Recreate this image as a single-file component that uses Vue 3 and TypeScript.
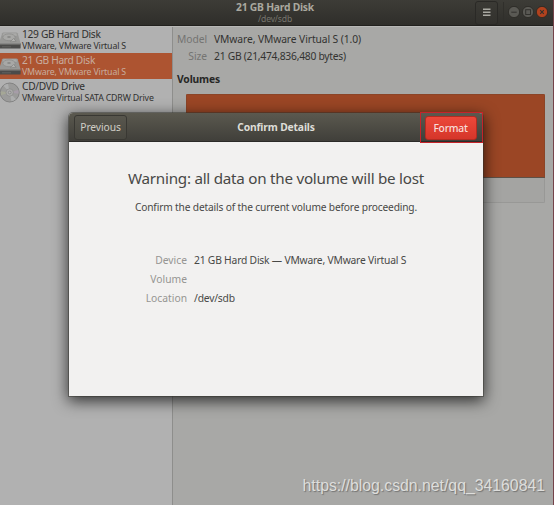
<script setup lang="ts">
interface Drive {
  name: string
  model: string
  kind: 'disk' | 'optical'
  selected?: boolean
}

const drives: Drive[] = [
  { name: '129 GB Hard Disk', model: 'VMware, VMware Virtual S', kind: 'disk' },
  { name: '21 GB Hard Disk', model: 'VMware, VMware Virtual S', kind: 'disk', selected: true },
  { name: 'CD/DVD Drive', model: 'VMware Virtual SATA CDRW Drive', kind: 'optical' },
]

const details = [
  { label: 'Device', value: '21 GB Hard Disk — VMware, VMware Virtual S' },
  { label: 'Volume', value: '' },
  { label: 'Location', value: '/dev/sdb' },
]
</script>

<template>
  <div class="window">
    <header class="titlebar">
      <div class="titles">
        <div class="title">21 GB Hard Disk</div>
        <div class="subtitle">/dev/sdb</div>
      </div>
      <div class="controls">
        <button class="menu" aria-label="Menu">
          <svg width="8" height="9" viewBox="0 0 8 9">
            <path d="M0 1.3h7.5M0 4.3h7.5M0 7.3h7.5" stroke="#aaa9a2" stroke-width="1.5" />
          </svg>
        </button>
        <span class="divider"></span>
        <svg class="wm" width="40" height="12" viewBox="0 0 40 12">
          <g fill="#5a5954" stroke="#262521" stroke-width=".7">
            <circle cx="6" cy="6" r="5.6" />
            <circle cx="20" cy="6" r="5.6" />
            <circle cx="34" cy="6" r="5.6" fill="#b1421e" />
          </g>
          <g fill="none" stroke="#32312d" stroke-width="1">
            <path d="M3.3 6.2h5.4" />
            <rect x="17.7" y="3.7" width="4.8" height="4.8" />
            <path d="M32.2 4.2l3.6 3.6M35.8 4.2l-3.6 3.6" stroke-width="1.1" />
          </g>
        </svg>
      </div>
    </header>

    <div class="body">
      <aside class="sidebar">
        <div v-for="d in drives" :key="d.name" class="drive" :class="{ selected: d.selected }">
          <svg v-if="d.kind === 'disk'" class="icon" width="21" height="20" viewBox="0 0 21 20">
            <path d="M0 12.5h20.6v4.2q0 .9-.9.9H0z" fill="#4b4b4a" />
            <path d="M0 12.2h20.6v1.5H0z" fill="#777775" />
            <path d="M2.2 2.2q.3-.8 1.2-.8h13q1 0 1.3.9l2.9 10.2H0V9z" fill="#989896" />
            <path d="M3.5 2.2h12.8l.7 2.5H2.6z" fill="#aaaaa8" />
            <ellipse cx="9" cy="6.3" rx="6.2" ry="3.4" fill="#a8a8a6" stroke="#858583" stroke-width=".6" />
            <ellipse cx="9" cy="6" rx="1.9" ry="1" fill="#8a8a88" />
            <path d="M13.4 7.5l2.8 2.6-5.8.8z" fill="#b2b2b0" stroke="#777775" stroke-width=".5" />
            <path d="M2 15.8h9" stroke="#6b6b69" stroke-width=".7" />
          </svg>
          <svg v-else class="icon" width="21" height="21" viewBox="0 0 21 21">
            <circle cx="9.7" cy="10.5" r="9.5" fill="#9b9b9a" stroke="#797978" stroke-width=".8" />
            <path d="M9.7 10.5L3.5 3.8A9 9 0 0 1 8 1.7zM9.7 10.5l6.2 6.7a9 9 0 0 1-4.5 2.1z" fill="#adaeae" />
            <path d="M9.7 10.5l8.6-2.7a9 9 0 0 1 .2 4z" fill="#a69da8" />
            <path d="M9.7 10.5L1 13.2a9 9 0 0 1-.1-4z" fill="#a5a796" />
            <circle cx="9.7" cy="10.5" r="3.7" fill="#aaaaa9" stroke="#858584" stroke-width=".6" />
            <circle cx="9.7" cy="10.5" r="1.4" fill="#b3b3b3" stroke="#777" stroke-width=".6" />
          </svg>
          <div class="drive-text">
            <div class="drive-name">{{ d.name }}</div>
            <div class="drive-model">{{ d.model }}</div>
          </div>
        </div>
      </aside>

      <main class="content">
        <dl class="info">
          <dt>Model</dt>
          <dd>VMware, VMware Virtual S (1.0)</dd>
          <dt>Size</dt>
          <dd class="tight">21 GB (21,474,836,480 bytes)</dd>
        </dl>
        <h2>Volumes</h2>
        <div class="volume">
          <div class="partition"></div>
          <div class="toolbar"></div>
        </div>
      </main>
    </div>

    <section class="dialog">
      <header class="dialog-bar">
        <button class="btn previous">Previous</button>
        <div class="dialog-title">Confirm Details</div>
        <div class="highlight">
          <button class="btn format">Format</button>
        </div>
      </header>
      <div class="dialog-body">
        <h1>Warning: all data on the volume will be lost</h1>
        <p>Confirm the details of the current volume before proceeding.</p>
        <dl class="details">
          <template v-for="row in details" :key="row.label">
            <dt>{{ row.label }}</dt>
            <dd>{{ row.value }}</dd>
          </template>
        </dl>
      </div>
    </section>

    <div class="watermark">https://blog.csdn.net/qq_34160841</div>
  </div>
</template>

<style>
body {
  overflow: hidden;
}
</style>

<style scoped>
* {
  box-sizing: border-box;
  margin: 0;
  padding: 0;
}
.window {
  position: relative;
  display: flex;
  flex-direction: column;
  width: 554px;
  height: 505px;
  border-right: 1px solid #75434a;
  background: #a8a8a6;
  font-family: 'Noto Sans', 'Open Sans', sans-serif;
  font-size: 10.3px;
  color: #333331;
  white-space: nowrap;
  overflow: hidden;
}
.titlebar {
  display: grid;
  grid-template-columns: 1fr auto;
  height: 26px;
  flex: none;
  background: linear-gradient(#3d3c37, #2f2e2a);
  border-bottom: 1px solid #22211e;
}
.titles {
  grid-area: 1 / 1 / 2 / 3;
  text-align: center;
  padding-right: 3px;
}
.title {
  font-weight: 700;
  line-height: 12px;
  padding-top: 1px;
  letter-spacing: -0.22px;
  color: #aaa89f;
}
.subtitle {
  font-size: 8.6px;
  line-height: 12px;
  letter-spacing: -0.18px;
  color: #77756d;
}
.controls {
  grid-area: 1 / 2 / 2 / 3;
  display: flex;
  align-items: center;
  padding-right: 5px;
}
.menu {
  display: flex;
  align-items: center;
  justify-content: center;
  width: 23px;
  height: 24px;
  border: 1px solid #2a2926;
  border-radius: 3px;
  background: linear-gradient(#3b3a35, #32312d);
}
.divider {
  width: 1px;
  height: 22px;
  margin: 0 4px 0 5px;
  background: #302f2b;
}
.wm {
  margin-top: -1px;
}
.body {
  display: flex;
  flex: 1;
  border-top: 1px solid #b8b8b6;
}
.sidebar {
  width: 173px;
  flex: none;
  border-right: 1px solid #8e8e8c;
  background: #b1b1b1;
}
.drive {
  display: flex;
  height: 26px;
  color: #30302f;
}
.selected {
  background: #ad5431;
  color: #c8ad9f;
}
.icon {
  flex: none;
  margin: 4px 1px 0 0;
}
.drive:last-child .icon {
  margin-top: 3px;
}
.drive-text {
  padding-top: 1px;
}
.drive-name {
  font-size: 10.2px;
  line-height: 13px;
  letter-spacing: -0.3px;
}
.drive-model {
  font-size: 8.8px;
  line-height: 11px;
  letter-spacing: -0.17px;
}
.content {
  flex: 1;
  padding: 4px 8px 0 4px;
}
.info {
  display: grid;
  grid-template-columns: 30px auto;
  column-gap: 7px;
  line-height: 17px;
}
.info dt {
  text-align: right;
  letter-spacing: -0.08px;
  color: #747472;
}
.info dd {
  letter-spacing: -0.1px;
}
.info dd.tight {
  letter-spacing: -0.26px;
}
h2 {
  margin-top: 6px;
  font-size: 10.3px;
  line-height: 16px;
  letter-spacing: -0.14px;
  color: #272725;
}
.volume {
  margin: 7px 0 0 9px;
  border-radius: 2px;
  overflow: hidden;
}
.partition {
  height: 84px;
  border: 1px solid #8b4427;
  border-bottom-color: #5e5046;
  background: #9b4625;
}
.toolbar {
  height: 25px;
  border: 1px solid #989896;
  border-top: 0;
  background: #a4a4a2;
}
.dialog {
  position: absolute;
  left: 69px;
  top: 113px;
  width: 414px;
  height: 283px;
  border-radius: 4px 4px 0 0;
  background: #f2f1f0;
  box-shadow: 0 0 0 1px rgba(50, 50, 45, 0.45), 0 4px 15px 1px rgba(0, 0, 0, 0.72);
}
.dialog-bar {
  display: grid;
  grid-template-columns: 1fr auto 1fr;
  align-items: center;
  height: 29px;
  padding: 1px 0 0 5px;
  border-radius: 4px 4px 0 0;
  border-bottom: 1px solid #2c2b28;
  background: linear-gradient(#5b594f, #403f3a);
}
.btn {
  height: 25px;
  border-radius: 3px;
  font-family: inherit;
  font-size: 10.3px;
  line-height: 23px;
}
.previous {
  justify-self: start;
  width: 53px;
  border: 1px solid #393833;
  background: linear-gradient(#58564d, #484740);
  color: #d0cec6;
  letter-spacing: -0.1px;
}
.dialog-title {
  margin-right: 5px;
  font-weight: 700;
  line-height: 25px;
  letter-spacing: -0.15px;
  color: #deddd7;
}
.highlight {
  justify-self: end;
  display: flex;
  justify-content: center;
  align-items: center;
  width: 63px;
  height: 31px;
  margin: -3px 0 -2px;
  padding: 1px 2px 0 0;
  border: 1px solid #c5232a;
}
.format {
  width: 52px;
  height: 24px;
  border: 1px solid #b42b21;
  background: linear-gradient(#ec483a, #d5362a);
  color: #f8deda;
  font-weight: 500;
  line-height: 22px;
  letter-spacing: -0.25px;
}
.dialog-body {
  padding-top: 25px;
  color: #484846;
  text-align: center;
}
h1 {
  font-size: 15.2px;
  font-weight: 400;
  line-height: 23px;
  letter-spacing: -0.25px;
}
p {
  margin-top: 8px;
  font-size: 10.2px;
  line-height: 18px;
  letter-spacing: -0.16px;
}
.details {
  display: grid;
  grid-template-columns: 118px auto;
  grid-auto-rows: 19px;
  column-gap: 7px;
  margin-top: 35px;
  line-height: 19px;
  text-align: left;
}
.details dt {
  text-align: right;
  color: #969592;
}
.details dd {
  letter-spacing: -0.2px;
}
.watermark {
  position: absolute;
  right: 8px;
  bottom: 9px;
  font-family: 'Liberation Sans', Arial, sans-serif;
  font-size: 15.8px;
  line-height: 20px;
  color: #dededc;
  text-shadow: 1px 1px 1px rgba(80, 80, 80, 0.6);
}
</style>
